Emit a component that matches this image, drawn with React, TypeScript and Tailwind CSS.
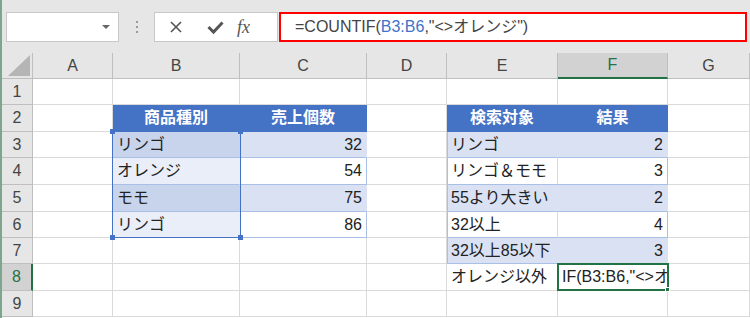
import React from "react";

type Cell = {
  text?: string;
  align?: "left" | "right" | "center";
  kind?: "head" | "band" | "plain" | "selBand" | "selPlain";
  edgeL?: boolean;
  edgeR?: boolean;
  tableRow?: boolean;
};

const cols = ["A", "B", "C", "D", "E", "F", "G"];

// rows 1..9, columns A..G
const rows: Cell[][] = [
  [{}, {}, {}, {}, {}, {}, {}],
  [
    {},
    { text: "商品種別", align: "center", kind: "head" },
    { text: "売上個数", align: "center", kind: "head" },
    {},
    { text: "検索対象", align: "center", kind: "head" },
    { text: "結果", align: "center", kind: "head" },
    {},
  ],
  [
    {},
    { text: "リンゴ", kind: "selBand", tableRow: true },
    { text: "32", align: "right", kind: "band", edgeR: true, tableRow: true },
    {},
    { text: "リンゴ", kind: "band", edgeL: true, tableRow: true },
    { text: "2", align: "right", kind: "band", edgeR: true, tableRow: true },
    {},
  ],
  [
    {},
    { text: "オレンジ", kind: "selPlain", tableRow: true },
    { text: "54", align: "right", kind: "plain", edgeR: true, tableRow: true },
    {},
    { text: "リンゴ＆モモ", kind: "plain", edgeL: true, tableRow: true },
    { text: "3", align: "right", kind: "plain", edgeR: true, tableRow: true },
    {},
  ],
  [
    {},
    { text: "モモ", kind: "selBand", tableRow: true },
    { text: "75", align: "right", kind: "band", edgeR: true, tableRow: true },
    {},
    { text: "55より大きい", kind: "band", edgeL: true, tableRow: true },
    { text: "2", align: "right", kind: "band", edgeR: true, tableRow: true },
    {},
  ],
  [
    {},
    { text: "リンゴ", kind: "selPlain", tableRow: true },
    { text: "86", align: "right", kind: "plain", edgeR: true, tableRow: true },
    {},
    { text: "32以上", kind: "plain", edgeL: true, tableRow: true },
    { text: "4", align: "right", kind: "plain", edgeR: true, tableRow: true },
    {},
  ],
  [
    {},
    {},
    {},
    {},
    { text: "32以上85以下", kind: "band", edgeL: true, tableRow: true },
    { text: "3", align: "right", kind: "band", edgeR: true, tableRow: true },
    {},
  ],
  [{}, {}, {}, {}, { text: "オレンジ以外" }, {}, {}],
  [{}, {}, {}, {}, {}, {}, {}],
];

const font = { fontFamily: '"Liberation Sans", "Noto Sans CJK JP", sans-serif' };

function GridCell({ cell }: { cell: Cell }) {
  const k = cell.kind;
  const bg =
    k === "head"
      ? "bg-[#4472c4] text-white font-bold border-[#4472c4]"
      : k === "band"
      ? "bg-[#d9e1f2] border-r-[#d9e1f2]"
      : k === "selBand"
      ? "bg-[#c8d4ec] border-r-[#c8d4ec]"
      : k === "selPlain"
      ? "bg-[#e9eef8] border-r-[#e9eef8]"
      : "bg-white";
  const bottom = cell.tableRow ? "border-b-[#a9bfe6]" : k === "head" ? "" : "border-b-[#dadada]";
  const right = cell.edgeR ? "border-r-[#a9bfe6]" : k ? "" : "border-r-[#dadada]";
  const plainRight = k === "plain" && !cell.edgeR ? "border-r-[#dadada]" : "";
  const align =
    cell.align === "right" ? "justify-end" : cell.align === "center" ? "justify-center" : "justify-start";
  return (
    <div
      className={`flex items-center whitespace-nowrap border-r border-b px-[4px] text-[16px] text-[#222] ${bg} ${bottom} ${right} ${plainRight} ${align} ${
        cell.edgeL ? "shadow-[inset_1px_0_0_#a9bfe6]" : ""
      } ${k === "head" ? "text-white" : ""}`}
    >
      {cell.text}
    </div>
  );
}

function Toolbar() {
  return (
    <div className="flex h-[53px] items-start bg-[#e6e6e6] pt-[12px] pl-[4px]">
      <div className="flex h-[30px] w-[113px] items-center justify-end border border-[#c8c8c8] bg-white pr-[8px]">
        <span className="h-0 w-0 border-x-[4px] border-t-[4px] border-x-transparent border-t-[#666]" />
      </div>
      <div className="flex h-[30px] w-[35px] flex-col items-center justify-center gap-[3px]">
        <span className="h-[2px] w-[2px] bg-[#9a9a9a]" />
        <span className="h-[2px] w-[2px] bg-[#9a9a9a]" />
        <span className="h-[2px] w-[2px] bg-[#9a9a9a]" />
      </div>
      <div className="flex h-[30px] w-[124px] items-center border border-[#c8c8c8] bg-white">
        <svg width="40" height="16" viewBox="0 0 40 16" className="ml-[1px]">
          <path d="M15 3 L25 13 M25 3 L15 13" stroke="#555" strokeWidth="1.6" fill="none" />
        </svg>
        <svg width="40" height="16" viewBox="0 0 40 16">
          <path d="M12.5 8 L17.5 13 L26.5 3.5" stroke="#555" strokeWidth="3" fill="none" />
        </svg>
        <span
          className="ml-[1px] text-[18px] italic text-[#555]"
          style={{ fontFamily: '"Liberation Serif", serif' }}
        >
          fx
        </span>
      </div>
      <div className="ml-[1px] flex h-[30px] w-[468px] items-center border-2 border-[#ff0000] bg-white pl-[14px] text-[16px] text-[#444]">
        =COUNTIF(<span className="text-[#3f72c8]">B3:B6</span>,"&lt;&gt;オレンジ")
      </div>
    </div>
  );
}

export default function App() {
  return (
    <div className="flex h-[318px] w-[750px] overflow-hidden bg-white" style={font}>
      <div className="w-[2px] bg-[#7ea68e]" />
      <div className="flex w-[748px] flex-col">
        <Toolbar />
        <div className="relative grid grid-cols-[31px_80px_127px_127px_80px_111px_110px_82px] grid-rows-[26px_26px_27px_26px_27px_27px_26px_26px_27px_26px]">
          {/* corner */}
          <div className="relative border-r border-b border-[#bfbfbf] bg-[#e6e6e6]">
            <svg width="31" height="26" className="absolute inset-0">
              <polygon points="28,2 28,23 6,23" fill="#b5b5b5" />
            </svg>
          </div>
          {cols.map((c) =>
            c === "F" ? (
              <div
                key={c}
                className="flex items-center justify-center border-r border-[#bfbfbf] border-b-2 border-b-[#217346] bg-[#d2d2d2] text-[16px] text-[#217346]"
              >
                {c}
              </div>
            ) : (
              <div
                key={c}
                className="flex items-center justify-center border-r border-b border-[#bfbfbf] bg-[#e6e6e6] text-[16px] text-[#444]"
              >
                {c}
              </div>
            )
          )}
          {rows.map((r, i) => (
            <React.Fragment key={i}>
              {i === 7 ? (
                <div className="flex items-center justify-center border-b border-b-[#bfbfbf] border-r-2 border-r-[#217346] bg-[#d2d2d2] text-[16px] text-[#217346]">
                  {i + 1}
                </div>
              ) : (
                <div className="flex items-center justify-center border-r border-b border-[#bfbfbf] bg-[#e6e6e6] text-[16px] text-[#444]">
                  {i + 1}
                </div>
              )}
              {r.map((cell, j) =>
                i === 7 && j === 5 ? (
                  <div
                    key={j}
                    className="flex items-center overflow-hidden whitespace-nowrap border-r border-b border-[#dadada] bg-white px-[4px] text-[16px] text-[#222]"
                  >
                    IF(B3:B6,"&lt;&gt;オレンジ")
                  </div>
                ) : (
                  <GridCell key={j} cell={cell} />
                )
              )}
            </React.Fragment>
          ))}
          {/* B3:B6 reference highlight */}
          <div className="pointer-events-none absolute top-[78px] left-[110px] h-[107px] w-[129px] border border-[#4472c4]">
            <span className="absolute -top-[3px] -left-[3px] h-[5px] w-[5px] bg-[#4472c4]" />
            <span className="absolute -top-[3px] -right-[3px] h-[5px] w-[5px] bg-[#4472c4]" />
            <span className="absolute -bottom-[3px] -left-[3px] h-[5px] w-[5px] bg-[#4472c4]" />
            <span className="absolute -right-[3px] -bottom-[3px] h-[5px] w-[5px] bg-[#4472c4]" />
          </div>
          {/* active cell F8 */}
          <div className="pointer-events-none absolute top-[210px] left-[555px] h-[28px] w-[112px] border-2 border-[#217346]">
            <span className="absolute -right-[3px] -bottom-[3px] h-[5px] w-[5px] border border-white bg-[#217346]" />
          </div>
        </div>
      </div>
    </div>
  );
}
